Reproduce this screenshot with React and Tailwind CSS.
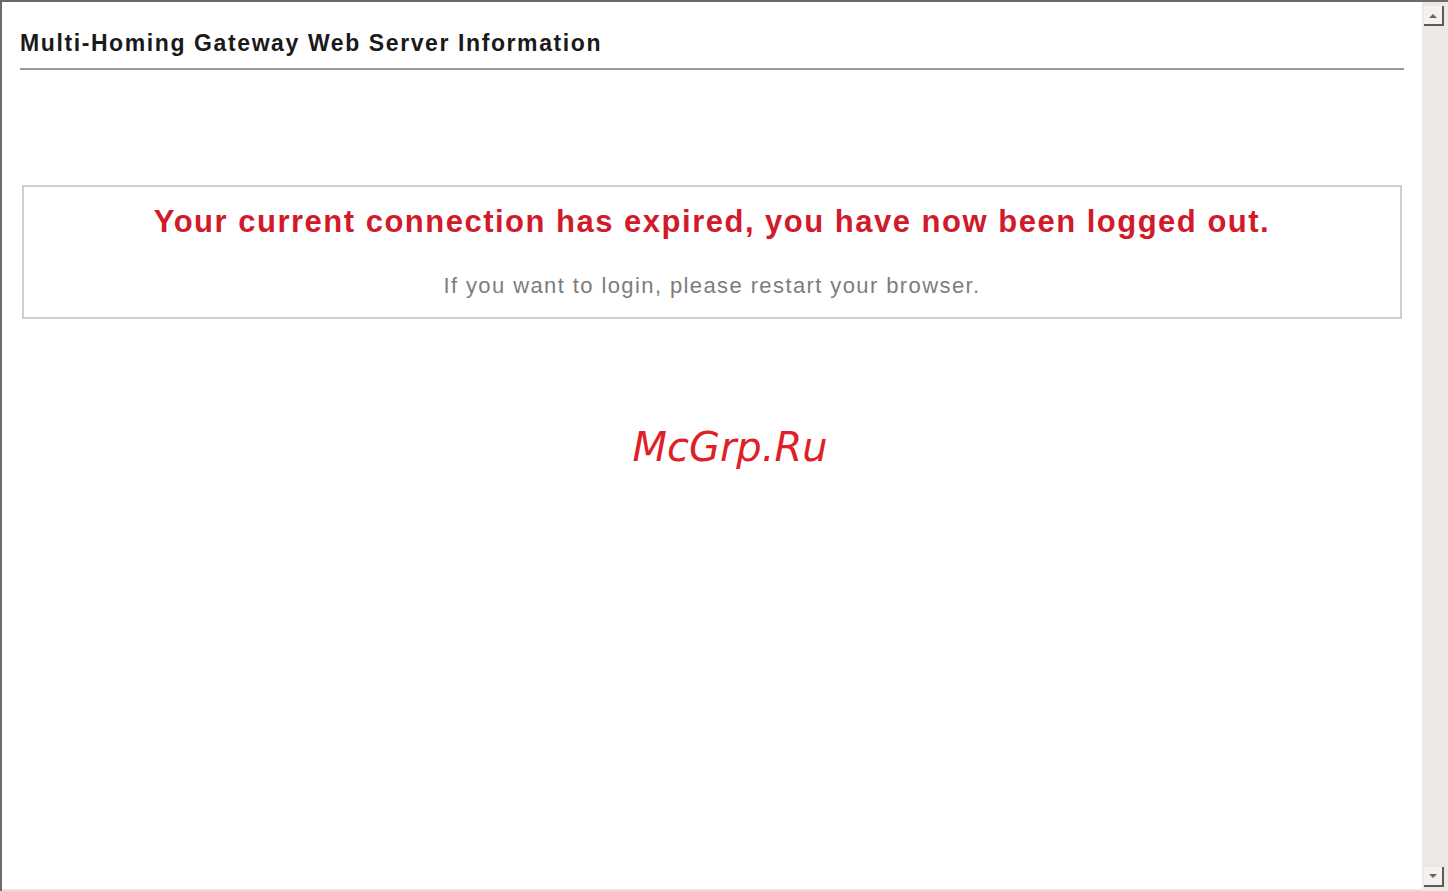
const App = () => {
    return (
        <div className="w-[1448px] h-[891px] flex bg-white border-t-2 border-l-2 border-[#6b6b6b] overflow-hidden" style={{ fontFamily: '"Liberation Sans", Arial, sans-serif' }}>
            <div className="flex-1 flex flex-col border-b-2 border-[#e4e4e4]">
                <div className="pl-[18px] pr-[18px] pt-[26px]">
                    <h1 className="text-[23px] leading-[30px] font-bold text-[#1a1a1a] tracking-[1.6px]">
                        Multi-Homing Gateway Web Server Information
                    </h1>
                    <div className="mt-[10px] h-[2px] bg-[#9a9a9a]" />
                </div>

                <div className="mt-[115px] ml-[20px] mr-[20px] border-2 border-[#cfcfcf] h-[134px] flex flex-col items-center">
                    <p className="mt-[16px] text-[31px] leading-[38px] font-bold text-[#d11a2a] tracking-[1.5px]">
                        Your current connection has expired, you have now been logged out.
                    </p>
                    <p className="mt-[31px] text-[22px] leading-[28px] text-[#7d7d7d] tracking-[1.4px]">
                        If you want to login, please restart your browser.
                    </p>
                </div>

                <div className="mt-[104px] flex justify-center pl-[36px]">
                    <span className="text-[40px] leading-[48px] italic text-[#e01f26]" style={{ fontFamily: '"DejaVu Sans", sans-serif' }}>
                        McGrp.Ru
                    </span>
                </div>
            </div>

            <div className="w-[26px] bg-[#ebe8e5] flex flex-col justify-between pl-[2px] pt-[4px] pb-[4px]">
                <div className="w-[20px] h-[20px] bg-[#f4f2ef] border-r-2 border-b-2 border-[#5a5a5a] flex items-center justify-center">
                    <svg width="8" height="5" viewBox="0 0 8 5"><path d="M0 5 L4 1 L8 5 Z" fill="#666" /></svg>
                </div>
                <div className="w-[20px] h-[20px] bg-[#f4f2ef] border-r-2 border-b-2 border-[#5a5a5a] flex items-center justify-center">
                    <svg width="8" height="5" viewBox="0 0 8 5"><path d="M0 0 L4 4 L8 0 Z" fill="#666" /></svg>
                </div>
            </div>
        </div>
    );
};

export default App;
